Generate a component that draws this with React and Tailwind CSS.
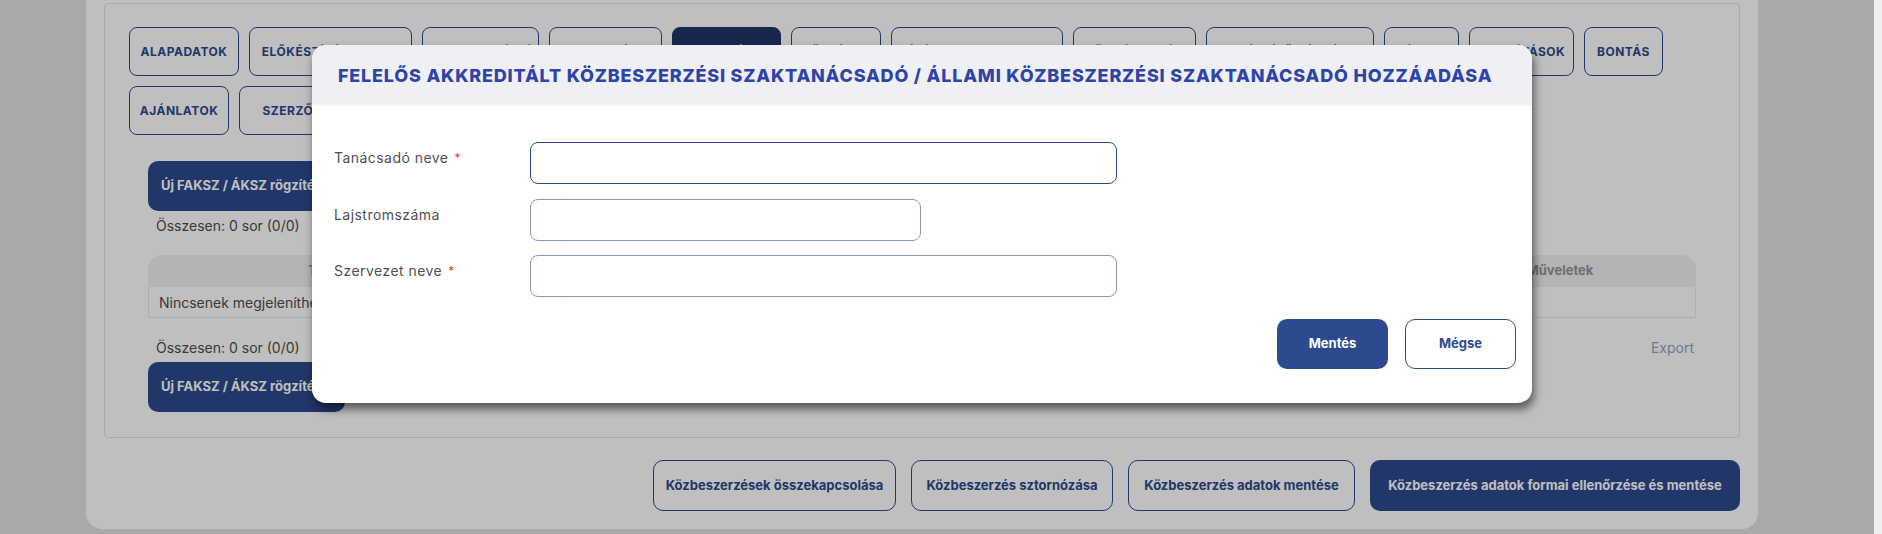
import React from "react";

const tabs = [
  { label: "ALAPADATOK", w: "w-[110px]" },
  { label: "ELŐKÉSZÍTÉS ADATAI", w: "w-[163px]" },
  { label: "DOKUMENTÁCIÓ", w: "w-[117px]" },
  { label: "HIRDETMÉNY", w: "w-[113px]" },
  { label: "FAKSZ / ÁKSZ", w: "w-[109px]", active: true },
  { label: "KÖZLÉSEK", w: "w-[90px]" },
  { label: "BÍRÁLATI SZEMPONTOK", w: "w-[172px]" },
  { label: "DÖNTÉSHOZÓK", w: "w-[123px]" },
  { label: "KIEGÉSZÍTŐ KÉRDÉSEK", w: "w-[168px]" },
  { label: "RÉSZEK", w: "w-[75px]" },
  { label: "MEGHÍVÁSOK", w: "w-[105px]" },
  { label: "BONTÁS", w: "w-[79px]" },
  { label: "AJÁNLATOK", w: "w-[100px]" },
  { label: "SZERZŐDÉSEK", w: "w-[140px]" },
];

function Tab({ label, w, active }) {
  return (
    <div
      className={
        active
          ? `${w} h-[49px] flex items-center justify-center whitespace-nowrap rounded-[8px] border border-[#1f3569] bg-[#1f3569] text-white text-[12px] font-bold tracking-[0.5px]`
          : `${w} h-[49px] flex items-center justify-center whitespace-nowrap rounded-[8px] border border-[#2c4a8e] bg-white text-[#2c4a8e] text-[12px] font-bold tracking-[0.5px]`
      }
    >
      {label}
    </div>
  );
}

function AddButton() {
  return (
    <div className="w-[197px] h-[50px] flex items-center pl-[13px] rounded-[10px] bg-[#2d498d] text-white text-[13px] font-bold whitespace-nowrap">
      Új FAKSZ / ÁKSZ rögzítése
    </div>
  );
}

function Field({ label, required, width, focused }) {
  return (
    <div className="flex items-start h-[42px]">
      <div className="w-[196px] pt-[6px] text-[14px] leading-[20px] tracking-[0.45px] text-[#505050]">
        {label}
        {required && <span className="ml-[6px] text-[#e53935] text-[12px] align-top">*</span>}
      </div>
      <div
        className={
          focused
            ? `${width} h-[42px] rounded-[8px] border border-[#2c4a8e] bg-white`
            : `${width} h-[42px] rounded-[8px] border border-[#8c96b4] bg-white`
        }
      />
    </div>
  );
}

export default function App() {
  return (
    <div className="relative flex h-[534px] w-full overflow-hidden bg-[#e2e2e2] font-['Inter',sans-serif]">
      {/* page */}
      <div className="relative flex-1">
        <div className="ml-[86px] mr-[116px] h-[529px] rounded-b-[16px] bg-white px-[18px] pt-[3px]">
          <div className="h-[435px] rounded-[4px] border border-[#e3e3e3]">
            <div className="flex flex-wrap gap-[10px] pl-[24px] pr-[20px] pt-[23px]">
              {tabs.map((t) => (
                <Tab key={t.label} {...t} />
              ))}
            </div>

            <div className="px-[43px] pt-[26px]">
              <AddButton />
              <div className="mt-[5px] w-fit pl-[8px] text-[14px] leading-[20px] text-[#4d4d4d]">Összesen: 0 sor (0/0)</div>

              <div className="mt-[19px]">
                <div className="grid grid-cols-[424px_1fr_1fr_270px] h-[32px] items-center rounded-t-[14px] bg-[#eff0f3] text-[13px] font-bold text-[#939499]">
                  <div className="text-center">Tanácsadó neve</div>
                  <div className="text-center">Lajstromszáma</div>
                  <div className="text-center">Szervezet neve</div>
                  <div className="text-center pr-[2px]">Műveletek</div>
                </div>
                <div className="h-[31px] flex items-center border-x border-b border-[#e8e8e8] pl-[10px] text-[14px] text-[#4d4d4d]">
                  Nincsenek megjeleníthető adatok.
                </div>
              </div>

              <div className="mt-[20px] flex items-center justify-between h-[20px] leading-[20px]">
                <div className="pl-[8px] text-[14px] text-[#4d4d4d]">Összesen: 0 sor (0/0)</div>
                <div className="text-[14px] text-[#8fa3c6] pr-[2px]">Export</div>
              </div>
              <div className="mt-[4px]">
                <AddButton />
              </div>
            </div>
          </div>

          <div className="mt-[22px] flex justify-end gap-[15px]">
            <div className="w-[243px] h-[51px] flex items-center justify-center rounded-[10px] border border-[#2c4a8e] bg-white text-[13px] font-bold text-[#2c4a8e]">
              Közbeszerzések összekapcsolása
            </div>
            <div className="w-[202px] h-[51px] flex items-center justify-center rounded-[10px] border border-[#2c4a8e] bg-white text-[13px] font-bold text-[#2c4a8e]">
              Közbeszerzés sztornózása
            </div>
            <div className="w-[227px] h-[51px] flex items-center justify-center rounded-[10px] border border-[#2c4a8e] bg-white text-[13px] font-bold text-[#2c4a8e]">
              Közbeszerzés adatok mentése
            </div>
            <div className="w-[370px] h-[51px] flex items-center justify-center rounded-[10px] bg-[#2d498d] text-[13px] font-bold text-white">
              Közbeszerzés adatok formai ellenőrzése és mentése
            </div>
          </div>
        </div>

        {/* backdrop */}
        <div className="absolute inset-0 bg-black/25" />

        {/* dialog */}
        <div className="absolute left-[312px] top-[45px] w-[1220px] h-[358px] overflow-hidden rounded-[14px] bg-white shadow-[2px_6px_10px_rgba(0,0,0,0.55)]">
          <div className="h-[60px] flex items-center pl-[26px] bg-[#eff0f4] text-[18px] font-extrabold text-[#3044a8] tracking-[0.8px] whitespace-nowrap">
            FELELŐS AKKREDITÁLT KÖZBESZERZÉSI SZAKTANÁCSADÓ / ÁLLAMI KÖZBESZERZÉSI SZAKTANÁCSADÓ HOZZÁADÁSA
          </div>
          <div className="pl-[22px] pt-[37px] flex flex-col gap-[14.5px]">
            <Field label="Tanácsadó neve" required width="w-[587px]" focused />
            <Field label="Lajstromszáma" width="w-[391px]" />
            <Field label="Szervezet neve" required width="w-[587px]" />
          </div>
          <div className="mt-[22px] pr-[16px] flex justify-end gap-[17px]">
            <div className="w-[111px] h-[50px] flex items-center justify-center rounded-[10px] bg-[#2c4a8e] text-[13px] font-bold text-white">
              Mentés
            </div>
            <div className="w-[111px] h-[50px] flex items-center justify-center rounded-[10px] border border-[#2c4a8e] bg-white text-[13px] font-bold text-[#2c4a8e]">
              Mégse
            </div>
          </div>
        </div>
      </div>
      {/* scrollbar track */}
      <div className="w-[8px] bg-[#efefef]" />
    </div>
  );
}
